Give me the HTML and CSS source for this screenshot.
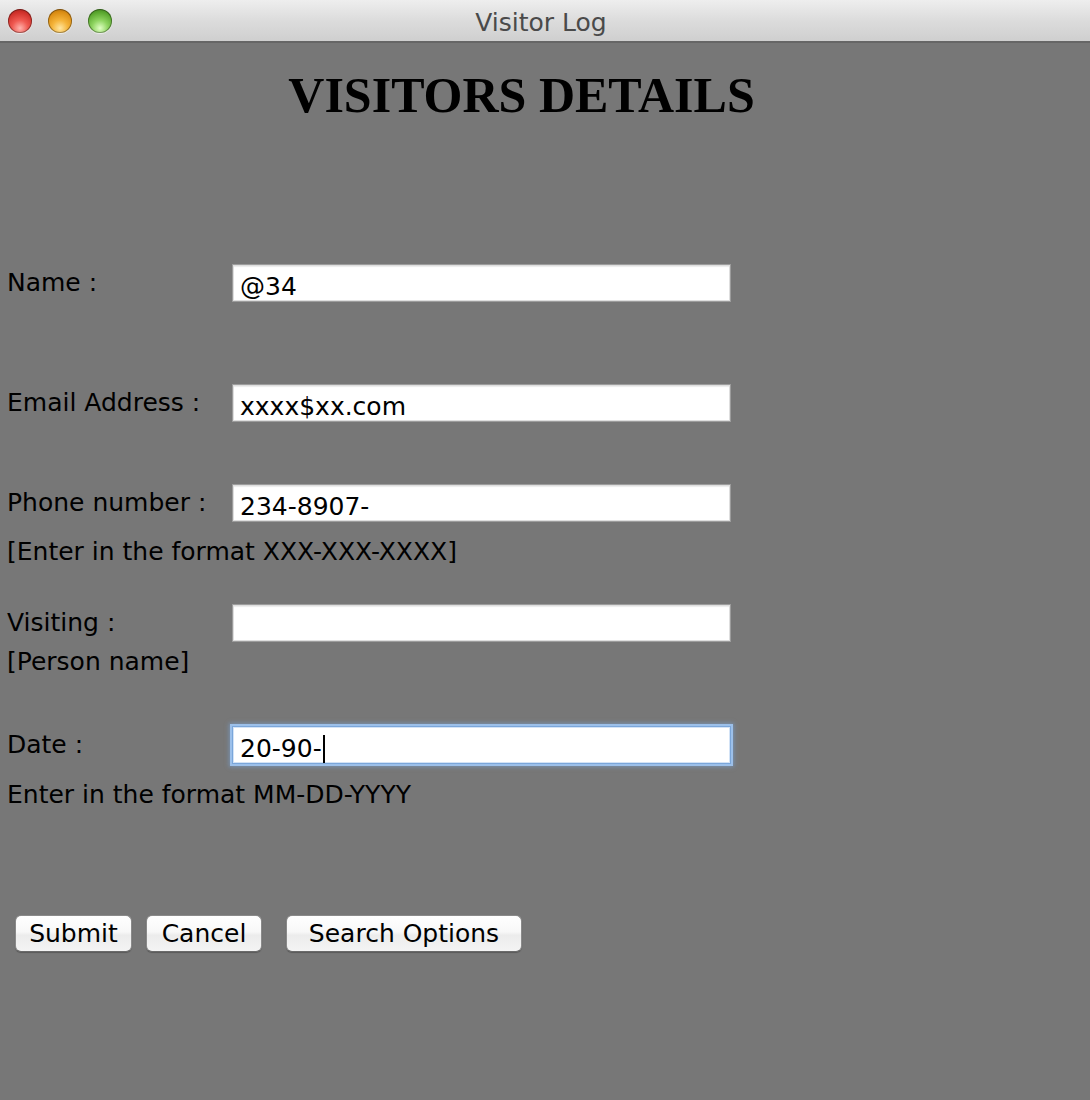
FILE: index.html
```html
<!DOCTYPE html>
<html lang="en">
<head>
<meta charset="utf-8">
<title>Visitor Log</title>
<link rel="stylesheet" href="styles.css">
</head>
<body>
<div class="window">
  <header class="titlebar">
    <div class="lights">
      <span class="light light-red"></span>
      <span class="light light-yellow"></span>
      <span class="light light-green"></span>
    </div>
    <div class="window-title">Visitor Log</div>
  </header>
  <main class="content">
    <h1 class="heading">VISITORS DETAILS</h1>
    <form class="form">
      <div class="field field-name">
        <label class="label">Name :</label>
        <div class="textfield">@34</div>
      </div>
      <div class="field field-email">
        <label class="label">Email Address :</label>
        <div class="textfield">xxxx$xx.com</div>
      </div>
      <div class="field field-phone">
        <label class="label">Phone number :</label>
        <div class="textfield">234-8907-</div>
      </div>
      <div class="hint hint-phone">[Enter in the format XXX-XXX-XXXX]</div>
      <div class="field field-visiting">
        <label class="label">Visiting :</label>
        <div class="textfield"></div>
      </div>
      <div class="hint hint-visiting">[Person name]</div>
      <div class="field field-date">
        <label class="label">Date :</label>
        <div class="textfield textfield-focused">20-90-<span class="caret"></span></div>
      </div>
      <div class="hint hint-date">Enter in the format MM-DD-YYYY</div>
      <div class="buttons">
        <button type="button" class="btn btn-submit">Submit</button>
        <button type="button" class="btn btn-cancel">Cancel</button>
        <button type="button" class="btn btn-search">Search Options</button>
      </div>
    </form>
  </main>
</div>
</body>
</html>
```
FILE: styles.css
```css
* { box-sizing: border-box; }
html, body {
  margin: 0;
  padding: 0;
  background: #777777;
}
body {
  width: 1090px;
  height: 1100px;
  overflow: hidden;
  font-family: "DejaVu Sans", "Liberation Sans", sans-serif;
  color: #000;
}
.titlebar {
  position: relative;
  height: 43px;
  background: linear-gradient(#eeeeee, #dcdcdc 50%, #cfcfcf);
  border-bottom: 2px solid #666666;
  display: flex;
  align-items: center;
  justify-content: center;
}
.lights {
  position: absolute;
  left: 8px;
  top: 9px;
  display: flex;
  gap: 16px;
}
.light {
  width: 24px;
  height: 24px;
  border-radius: 50%;
  box-shadow: inset 0 0 0 1px rgba(0,0,0,0.35), 0 1px 1px rgba(255,255,255,0.6);
}
.light-red {
  background: radial-gradient(circle at 50% 80%, #ffb3ad 0%, #f05a52 35%, #d0312b 70%, #8e1b17 100%);
}
.light-yellow {
  background: radial-gradient(circle at 50% 80%, #ffe6a0 0%, #f5b43a 35%, #dc8e14 70%, #9a5e0a 100%);
}
.light-green {
  background: radial-gradient(circle at 50% 80%, #e0ffc4 0%, #8fd561 35%, #5aa72f 70%, #316a16 100%);
}
.window-title {
  font-size: 25px;
  color: #4a4a4a;
  padding-top: 3px;
  padding-right: 8px;
}
.content {
  padding: 0 0 0 7px;
}
.heading {
  margin: 28px 0 0 0;
  text-align: center;
  font-family: "Liberation Serif", "Times New Roman", serif;
  font-weight: bold;
  font-size: 50px;
  line-height: 49px;
  padding-right: 54px;
  letter-spacing: 0;
}
.form {
  margin-top: 144px;
  display: flex;
  flex-direction: column;
}
.field {
  display: grid;
  grid-template-columns: 225px 499px;
  height: 38px;
}
.field-email { margin-top: 82px; }
.field-phone { margin-top: 62px; }
.field-visiting { margin-top: 37px; }
.field-date { margin-top: 49px; }
.label {
  font-size: 25px;
  line-height: 38px;
  white-space: nowrap;
}
.textfield {
  height: 38px;
  background: #ffffff;
  border: 1px solid #9c9c9c;
  box-shadow: inset 0 0 0 1px #dedede, inset 0 2px 1px rgba(0,0,0,0.08);
  padding: 8px 0 0 7px;
  font-size: 25px;
  line-height: 28px;
  white-space: nowrap;
}
.textfield-focused {
  border-color: #7aa6da;
  box-shadow: 0 0 0 2px #9cc0ea, 0 0 4px 3px rgba(120,165,220,0.55), inset 0 0 0 1px #d3e3f6;
}
.caret {
  display: inline-block;
  width: 0;
  height: 28px;
  border-left: 2px solid #000;
  vertical-align: -6px;
  margin-left: 1px;
}
.hint {
  font-size: 25px;
  line-height: 30px;
  white-space: nowrap;
}
.hint-phone { margin-top: 15px; }
.hint-visiting { margin-top: 5px; }
.hint-date { margin-top: 16px; }
.buttons {
  margin-top: 105px;
  padding-left: 8px;
  display: flex;
  align-items: center;
}
.btn {
  height: 37px;
  font-family: "DejaVu Sans", "Liberation Sans", sans-serif;
  font-size: 25px;
  color: #000;
  background: linear-gradient(#ffffff, #f8f8f8 45%, #ececec 55%, #f4f4f4);
  border: 1px solid #8a8a8a;
  border-bottom-color: #6a6a6a;
  border-radius: 6px;
  box-shadow: 0 1px 1px rgba(0,0,0,0.25);
  padding: 0;
  line-height: 35px;
}
.btn-submit { width: 117px; }
.btn-cancel { width: 116px; margin-left: 14px; }
.btn-search { width: 236px; margin-left: 24px; }
```
